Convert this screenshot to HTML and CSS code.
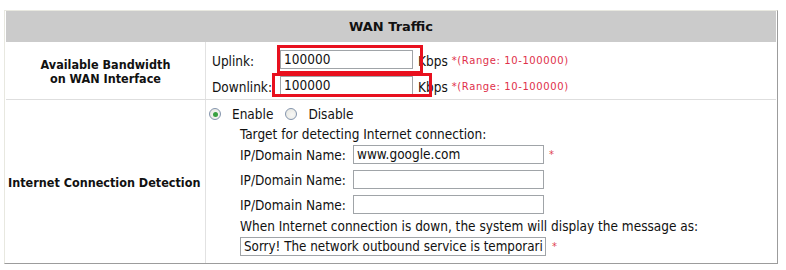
FILE: index.html
```html
<!DOCTYPE html>
<html>
<head>
<meta charset="utf-8">
<link rel="stylesheet" href="styles.css">
</head>
<body>
<div class="panel">
  <div class="head">WAN Traffic</div>
  <div class="row row-bw">
    <div class="label">Available Bandwidth<br>on WAN Interface</div>
    <div class="value bw">
      <div class="line">
        <span class="lab lab-up">Uplink:</span>
        <span class="field-wrap">
          <span class="inp inp-bw">100000</span>
          <span class="mark mark-up"></span>
        </span>
        <span class="unit">Kbps</span>
        <span class="range">*(Range: 10-100000)</span>
      </div>
      <div class="line">
        <span class="lab lab-up">Downlink:</span>
        <span class="field-wrap">
          <span class="inp inp-bw">100000</span>
          <span class="mark mark-down"></span>
        </span>
        <span class="unit">Kbps</span>
        <span class="range">*(Range: 10-100000)</span>
      </div>
    </div>
  </div>
  <div class="row row-det">
    <div class="label">Internet Connection Detection</div>
    <div class="value det">
      <div class="radios">
        <span class="radio on"></span><span class="rlabel">Enable</span>
        <span class="radio"></span><span class="rlabel">Disable</span>
      </div>
      <div class="sub">
        <div class="txt txt-target">Target for detecting Internet connection:</div>
        <div class="ipline"><span class="iplab">IP/Domain Name:</span><span class="inp inp-ip">www.google.com</span><span class="star">*</span></div>
        <div class="ipline"><span class="iplab">IP/Domain Name:</span><span class="inp inp-ip"></span></div>
        <div class="ipline"><span class="iplab">IP/Domain Name:</span><span class="inp inp-ip"></span></div>
        <div class="txt txt-when">When Internet connection is down, the system will display the message as:</div>
        <div class="ipline msgline"><span class="inp inp-msg">Sorry! The network outbound service is temporari</span><span class="star star-msg">*</span></div>
      </div>
    </div>
  </div>
</div>
</body>
</html>
```
FILE: styles.css
```css
html, body {
  margin: 0;
  padding: 0;
  background: #ffffff;
}
body {
  font-family: "DejaVu Sans Condensed", "DejaVu Sans", sans-serif;
  font-size: 13.5px;
  color: #111;
}
.panel {
  position: absolute;
  left: 4px;
  top: 10px;
  width: 770px;
  height: 252px;
  border-left: 1px solid #e8e8e0;
  border-top: 1px solid #e8e8e0;
  border-right: 1px solid #9c9c9c;
  border-bottom: 1px solid #9c9c9c;
  padding: 0 1px 0 1px;
  box-sizing: content-box;
  display: flex;
  flex-direction: column;
}
.head {
  height: 31px;
  background: #cbcbcb;
  font-family: "DejaVu Sans", sans-serif;
  font-weight: bold;
  font-size: 13px;
  text-align: center;
  line-height: 31px;
  color: #111;
}
.row {
  display: grid;
  grid-template-columns: 200px 1fr;
}
.row-bw {
  height: 57px;
  border-bottom: 1px solid #dedede;
}
.row-det {
  flex: 1;
}
.label {
  border-right: 1px solid #e2e2e2;
  font-weight: bold;
  font-size: 12.5px;
  text-align: center;
  display: flex;
  align-items: center;
  justify-content: center;
  line-height: 14px;
  padding-top: 2px;
}
.row-det .label {
  padding-top: 2px;
  justify-content: flex-start;
  padding-left: 2px;
}
.value {
  padding-left: 6px;
}
.bw {
  display: flex;
  flex-direction: column;
  gap: 7px;
  padding-top: 9px;
}
.line {
  display: flex;
  align-items: center;
  height: 19px;
}
.lab {
  width: 68px;
}
.field-wrap {
  position: relative;
  display: inline-block;
}
.inp {
  display: inline-block;
  box-sizing: border-box;
  height: 19px;
  border: 1px solid #a0a4a8;
  line-height: 17px;
  padding-left: 3px;
  white-space: nowrap;
  overflow: hidden;
  background: #fff;
}
.inp-bw {
  width: 133px;
}
.mark {
  position: absolute;
  border: 3px solid #e8101e;
  box-sizing: border-box;
}
.mark-up {
  left: -3px;
  top: -5px;
  width: 146px;
  height: 29px;
}
.mark-down {
  left: -8px;
  top: -3px;
  width: 160px;
  height: 24px;
}
.unit {
  margin-left: 5px;
}
.range {
  margin-left: 4px;
  color: #e0304a;
  font-family: "DejaVu Sans", sans-serif;
  font-size: 10px;
  letter-spacing: 0.6px;
}
.det {
  padding-left: 3px;
  padding-top: 6px;
}
.radios {
  display: flex;
  align-items: center;
  height: 16px;
}
.radio {
  width: 12px;
  height: 12px;
  border: 1px solid #8495ad;
  border-radius: 50%;
  box-sizing: border-box;
  background: radial-gradient(circle at 60% 60%, #f8f8f6 0%, #e4e4de 100%);
  display: inline-flex;
  align-items: center;
  justify-content: center;
}
.radio.on::after {
  content: "";
  width: 5px;
  height: 5px;
  border-radius: 50%;
  background: #38a040;
}
.rlabel {
  margin-left: 11px;
  margin-right: 12px;
}
.sub {
  padding-left: 31px;
  display: flex;
  flex-direction: column;
}
.txt {
  display: flex;
  align-items: center;
  box-sizing: border-box;
}
.txt-target {
  height: 20px;
  padding-top: 3px;
}
.txt-when {
  height: 18px;
}
.ipline {
  display: flex;
  align-items: center;
  height: 25px;
}
.msgline {
  height: 22px;
}
.iplab {
  width: 113px;
}
.inp-ip {
  width: 191px;
}
.inp-msg {
  width: 306px;
  font-size: 13.3px;
}
.star {
  color: #e04050;
  font-size: 11px;
  margin-left: 5px;
}
.star-msg {
  margin-left: 6px;
}
```
